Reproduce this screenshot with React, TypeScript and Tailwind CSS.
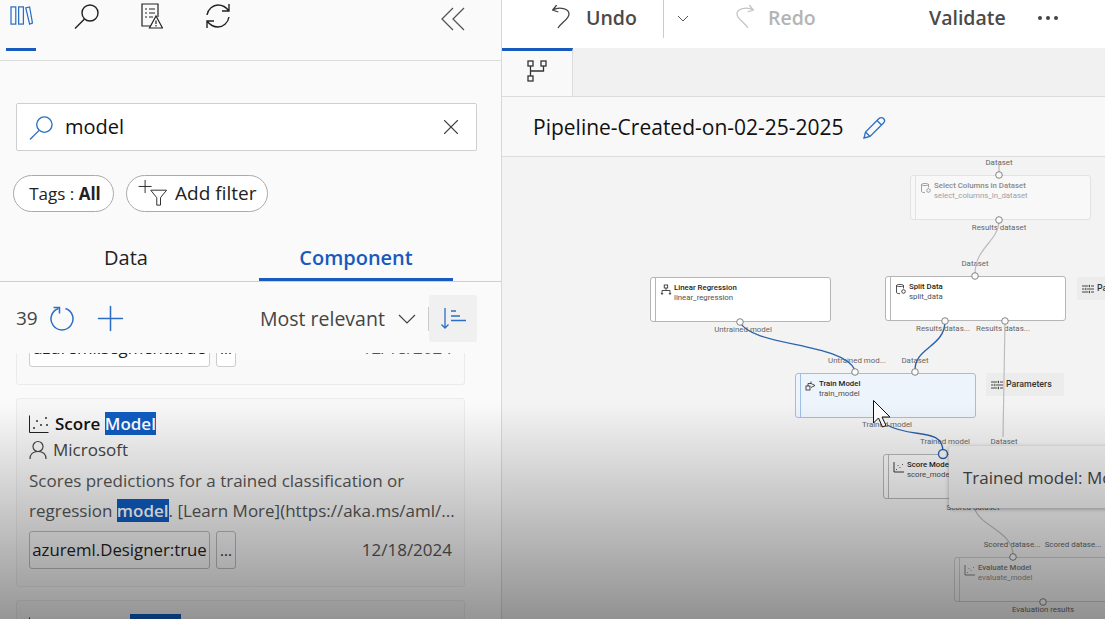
import { Plus, X } from 'lucide-react';

const portLabels = [
  { text: 'Dataset', className: 'left-[497px] top-[6px]' },
  { text: 'Results dataset', className: 'left-[497px] top-[71px]' },
  { text: 'Dataset', className: 'left-[473px] top-[107px]' },
  { text: 'Untrained model', className: 'left-[241px] top-[173px]' },
  { text: 'Results datas...', className: 'left-[441px] top-[172px]' },
  { text: 'Results datas...', className: 'left-[501px] top-[172px]' },
  { text: 'Untrained mod...', className: 'left-[355px] top-[204px]' },
  { text: 'Dataset', className: 'left-[413px] top-[204px]' },
  { text: 'Trained model', className: 'left-[385px] top-[268px]' },
  { text: 'Trained model', className: 'left-[443px] top-[285px]' },
  { text: 'Dataset', className: 'left-[502px] top-[285px]' },
  { text: 'Scored dataset', className: 'left-[471px] top-[351px]' },
  { text: 'Scored datase...', className: 'left-[510px] top-[388px]' },
  { text: 'Scored datase...', className: 'left-[571px] top-[388px]' },
  { text: 'Evaluation results', className: 'left-[541px] top-[453px]' },
];

const ports = [
  [497, 18],
  [497, 63],
  [473, 119],
  [238, 165],
  [443, 164],
  [503, 164],
  [353, 215],
  [413, 215],
  [511, 400],
  [541, 445],
];

const NodeIcon = ({ kind }: { kind: string }) => {
  if (kind === 'data') {
    return (
      <svg viewBox="0 0 12 12" className="h-3 w-3 shrink-0" fill="none" stroke="currentColor" strokeWidth="0.8">
        <path d="M1.5 2.5c0-1.4 7-1.4 7 0v3M1.5 2.5v7c0 .8 2 1.100 3.500 1.100M1.500 2.500c0 1.400 7 1.400 7 0" />
        <circle cx="8.500" cy="8.500" r="1.800" />
      </svg>
    );
  }
  if (kind === 'tree') {
    return (
      <svg viewBox="0 0 12 12" className="h-3 w-3 shrink-0" fill="none" stroke="currentColor" strokeWidth="0.8">
        <rect x="4.200" y="1" width="3.500" height="3" />
        <path d="M6 4v2.500M2 10V6.500h8V10" />
        <path d="M1 9l1 1.500L3 9M9 9l1 1.500L11 9" />
      </svg>
    );
  }
  if (kind === 'train') {
    return (
      <svg viewBox="0 0 12 12" className="h-3 w-3 shrink-0" fill="none" stroke="currentColor" strokeWidth="0.8">
        <rect x="1" y="6" width="4" height="4" />
        <path d="M3 6V3.500h3V1.500M6 3.500l4 2-4 2" />
      </svg>
    );
  }
  return (
    <svg viewBox="0 0 12 12" className="h-3 w-3 shrink-0" fill="none" stroke="currentColor" strokeWidth="0.9">
      <path d="M1 1v10h10" />
      <path d="M3.500 8v.8M5 4v.8M7 6v.8M9.500 3v.8" />
    </svg>
  );
};

const PipelineNode = ({
  title,
  name,
  icon,
  className,
}: {
  title: string;
  name: string;
  icon: string;
  className: string;
}) => (
  <div className={`absolute flex h-[45px] w-[181px] rounded-[3px] border ${className}`}>
    <div className="w-[5px] shrink-0 border-r border-inherit" />
    <div className="flex gap-[2px] pl-[4px] pt-[5px] font-['Roboto',sans-serif]">
      <div className="pt-[1px]">
        <NodeIcon kind={icon} />
      </div>
      <div className="text-[7.800px] leading-[10px]">
        <div className="font-medium">{title}</div>
        <div className="font-normal opacity-80">{name}</div>
      </div>
    </div>
  </div>
);

const ParamsIcon = () => (
  <svg viewBox="0 0 12 10" className="h-[10px] w-3 shrink-0" fill="none" stroke="currentColor" strokeWidth="0.9">
    <path d="M0 2h6.500M9 2h3M0 5h2.500M5 5h7M0 8h6.500M9 8h3" />
    <path d="M7.500 .8v2.400M3.800 3.800v2.400M7.500 6.800v2.400" />
  </svg>
);

const ScatterIcon = () => (
  <svg viewBox="0 0 20 18" className="h-[18px] w-5 shrink-0" fill="none" stroke="#222" strokeWidth="1">
    <path d="M.5 .5v17h19" />
    <path d="M5 12v2M8 5v2M12 9v2M17 2v2M18 9v2" strokeWidth="1.400" />
  </svg>
);

const ComponentCard = () => (
  <div className="mt-[13px] h-[189px] rounded-[3px] border border-[#ebebeb] bg-[#f7f7f7] px-3 pt-[13px]">
    <div className="flex h-[24px] items-center gap-[6px]">
      <ScatterIcon />
      <span className="text-[17px] font-semibold text-[#111]">
        Score <mark className="bg-[#0f5cc0] text-white">Model</mark>
      </span>
    </div>
    <div className="mt-[2px] flex h-[24px] items-center gap-[6px] text-[17px] text-[#444]">
      <svg viewBox="0 0 18 20" className="h-5 w-[18px]" fill="none" stroke="#444" strokeWidth="1.200">
        <circle cx="9" cy="6.500" r="5" />
        <path d="M1 19c0-5 3-7.500 8-7.500s8 2.500 8 7.500" />
      </svg>
      Microsoft
    </div>
    <p className="mt-[4px] text-[17px] leading-[30px] whitespace-nowrap text-[#555]">
      Scores predictions for a trained classification or
      <br />
      regression <mark className="bg-[#0f5cc0] font-semibold text-white">model</mark>. [Learn More](https://aka.ms/aml/...
    </p>
    <div className="mt-[5px] flex items-center">
      <span className="flex h-[38px] w-[181px] items-center justify-center rounded-[3px] border border-[#bbb] text-[16.800px] text-[#222]">
        azureml.Designer:true
      </span>
      <span className="ml-[6px] flex h-[38px] w-[20px] items-center justify-center rounded-[3px] border border-[#bbb] text-[15px] text-[#222]">
        ...
      </span>
      <span className="ml-auto text-[17px] text-[#555]">12/18/2024</span>
    </div>
  </div>
);

const LeftPanel = () => (
  <aside className="flex h-full w-[502px] shrink-0 flex-col border-r border-[#d8d8d8] bg-[#fafafa]">
    {/* Icon tabs */}
    <div className="flex h-[61px] shrink-0 items-start border-b border-[#dcdcdc] pr-[36px]">
      <div className="ml-[6px] flex h-[51px] w-[30px] justify-center border-b-[3px] border-[#185abd] pt-[5px]">
        <svg viewBox="0 0 24 22" className="h-[21px] w-[23px]" fill="none" stroke="#2a6fc4" strokeWidth="1.300">
          <rect x="1" y="2" width="5" height="18" />
          <rect x="9" y="2" width="5" height="18" />
          <path d="M16.500 3l4-1 3 17-3 1z" />
        </svg>
      </div>
      <svg viewBox="0 0 26 26" className="ml-[38px] mt-[3px] h-[26px] w-[26px]" fill="none" stroke="#222" strokeWidth="1.400">
        <circle cx="16" cy="10" r="8" />
        <path d="M10.500 16L1 25.500" />
      </svg>
      <svg viewBox="0 0 22 26" className="ml-[41px] mt-[3px] h-[26px] w-[22px]" fill="none" stroke="#222" strokeWidth="1.200">
        <path d="M9 23H1V1h16v13" />
        <path d="M4 6h2M8 6h6M4 10h2M8 10h6M4 14h2M8 14h4" />
        <path d="M15 13l6.500 12h-13z" fill="#fafafa" />
        <path d="M15 17.500v3.500M15 22v1.500" />
      </svg>
      <svg viewBox="0 0 26 26" className="ml-[42px] mt-[3px] h-[26px] w-[26px]" fill="none" stroke="#222" strokeWidth="1.400">
        <path d="M2 12C3 6 8 2 13 2c4 0 8 2 11 6M24 1v7h-7" />
        <path d="M24 14c-1 6-6 10-11 10-4 0-8-2-11-6M2 25v-7h7" />
      </svg>
      <svg viewBox="0 0 24 24" className="ml-auto mt-[7px] h-[24px] w-[24px]" fill="none" stroke="#555" strokeWidth="1.300">
        <path d="M12 1L1 12l11 11M23 1L12 12l11 11" />
      </svg>
    </div>

    {/* Search */}
    <div className="mx-4 mt-[42px] flex h-12 w-[461px] shrink-0 items-center rounded-[2px] border border-[#cfcfcf] bg-white pl-[12px] pr-[12px]">
      <svg viewBox="0 0 26 26" className="h-[25px] w-[25px]" fill="none" stroke="#2a6fc4" strokeWidth="1.400">
        <circle cx="16" cy="10" r="8" />
        <path d="M10.500 16L1 25.500" />
      </svg>
      <span className="ml-[11px] text-[20px] text-[#111]">model</span>
      <X className="ml-auto h-[26px] w-[26px] text-[#444]" strokeWidth={1} />
    </div>

    {/* Filters */}
    <div className="ml-[13px] mt-6 flex shrink-0 gap-3">
      <div className="flex h-[37px] w-[101px] items-center justify-center rounded-full border border-[#aaa] bg-white pl-[3px] text-[17px] text-[#222]">
        Tags :&nbsp;<b className="font-bold">All</b>
      </div>
      <div className="flex h-[37px] w-[142px] items-center rounded-full border border-[#aaa] bg-white pl-[11px] text-[19px] text-[#222]">
        <svg viewBox="0 0 32 30" className="mb-[2px] h-[28px] w-[31px]" fill="none" stroke="#222" strokeWidth="1">
          <path d="M7 1v14M0 8h14" />
          <path d="M13 12h17l-6.500 8v8h-4v-8z" />
        </svg>
        <span className="ml-[6px]">Add filter</span>
      </div>
    </div>

    {/* Data / Component tabs */}
    <div className="mt-[25px] flex h-[45px] shrink-0 items-stretch border-b border-[#cfcfcf] pl-[7px]">
      <div className="flex w-[238px] items-center justify-center pb-[2px] text-[20px] text-[#222]">Data</div>
      <div className="ml-[14px] flex w-[194px] items-center justify-center border-b-[3px] border-[#185abd] pt-[1px] text-[20px] font-semibold text-[#185abd]">
        Component
      </div>
    </div>

    {/* Sort row */}
    <div className="flex h-[71px] shrink-0 items-center pl-4 pr-6 pt-[2px]">
      <span className="w-[22px] text-[19px] text-[#444]">39</span>
      <svg viewBox="0 0 26 26" className="ml-[11px] h-[26px] w-[26px]" fill="none" stroke="#2a6fc4" strokeWidth="1.500">
        <path d="M16.500 2.500a11 11 0 1 1-7 0" />
        <path d="M4.500 1.500h6v6" />
      </svg>
      <Plus className="ml-[15px] h-[41px] w-[41px] text-[#2a6fc4]" strokeWidth={0.9} />
      <span className="ml-[129px] w-[127px] whitespace-nowrap text-[19.500px] text-[#444]">Most relevant</span>
      <svg viewBox="0 0 18 10" className="ml-[11px] h-[10px] w-[18px]" fill="none" stroke="#444" strokeWidth="1.200">
        <path d="M1 1l8 8 8-8" />
      </svg>
      <div className="ml-[12px] h-[24px] w-px bg-[#ccc]" />
      <div className="flex h-[47px] w-[48px] items-center justify-center rounded-[3px] bg-[#f0f0f0]">
        <svg viewBox="0 0 25 21" className="h-[21px] w-[25px]" fill="none" stroke="#2a6fc4" strokeWidth="1.300">
          <path d="M4 0v20M.5 16.500L4 20l3.500-3.500" />
          <path d="M10 3h5M10 8h9M10 12.500h15" />
        </svg>
      </div>
    </div>

    {/* Results list */}
    <div className="min-h-0 flex-1 overflow-hidden pl-4 pr-9">
      <div className="-mt-[8px] h-[40px] rounded-[3px] border border-[#ebebeb] bg-[#f9f9f9] px-3">
        <div className="-mt-[17px] flex items-center">
          <span className="flex h-[38px] w-[181px] items-center justify-center rounded-[3px] border border-[#ccc] bg-white text-[16.800px] text-[#222]">
            azureml.segment:true
          </span>
          <span className="ml-[6px] flex h-[38px] w-[20px] items-center justify-center rounded-[3px] border border-[#ccc] bg-white text-[15px] text-[#222]">
            ...
          </span>
          <span className="ml-auto text-[17px] text-[#555]">12/18/2024</span>
        </div>
      </div>
      <ComponentCard />
      <div className="mt-[13px] rounded-[3px] border border-[#ebebeb] bg-[#f7f7f7] px-3 pt-[13px]">
        <div className="flex h-[24px] items-center gap-[6px]">
          <ScatterIcon />
          <span className="text-[17px] font-semibold text-[#111]">
            Evaluate <mark className="bg-[#0f5cc0] text-white">Model</mark>
          </span>
        </div>
      </div>
    </div>
  </aside>
);

const Canvas = () => (
  <div className="relative min-h-0 flex-1 overflow-hidden bg-[#f3f3f3]">
    <PipelineNode
      title="Select Columns in Dataset"
      name="select_columns_in_dataset"
      icon="data"
      className="left-[408px] top-[18px] border-[#e2e2e2] bg-[#f8f8f8] text-[#8a8a8a]"
    />
    <PipelineNode
      title="Linear Regression"
      name="linear_regression"
      icon="tree"
      className="left-[148px] top-[120px] border-[#b5b5b5] bg-white text-[#222]"
    />
    <PipelineNode
      title="Split Data"
      name="split_data"
      icon="data"
      className="left-[383px] top-[119px] border-[#b5b5b5] bg-white text-[#222]"
    />
    <PipelineNode
      title="Train Model"
      name="train_model"
      icon="train"
      className="left-[293px] top-[216px] border-[#9dbfe6] bg-[#eef4fb] text-[#222]"
    />
    <PipelineNode
      title="Score Model"
      name="score_model"
      icon="scatter"
      className="left-[381px] top-[297px] border-[#b5b5b5] bg-[#f7f7f7] text-[#222]"
    />
    <PipelineNode
      title="Evaluate Model"
      name="evaluate_model"
      icon="scatter"
      className="left-[452px] top-[400px] border-[#cfcfcf] bg-[#f5f5f5] text-[#777]"
    />

    <div className="absolute left-[575px] top-[120px] flex h-[23px] w-[90px] items-center gap-[3px] bg-[#ececec] pl-[5px] font-['Roboto',sans-serif] text-[8.800px] font-medium text-[#333]">
      <ParamsIcon />
      Parameters
    </div>
    <div className="absolute left-[484px] top-[216px] flex h-[23px] w-[78px] items-center gap-[3px] bg-[#ececec] pl-[5px] font-['Roboto',sans-serif] text-[8.800px] font-medium text-[#333]">
      <ParamsIcon />
      Parameters
    </div>

    {portLabels.map((label, i) => (
      <span
        key={i}
        className={`absolute -translate-x-1/2 -translate-y-1/2 whitespace-nowrap font-['Roboto',sans-serif] text-[7.900px] text-[#666] ${label.className}`}
      >
        {label.text}
      </span>
    ))}

    {/* Connectors and ports */}
    <svg viewBox="0 0 603 462" className="absolute inset-0 h-[462px] w-[603px]" fill="none">
      <path d="M497 8V16M497 63C497 85 473 90 473 117M503 164L501 280M473 353C480 370 511 375 511 398" stroke="#bdbdbd" strokeWidth="1.200" />
      <path d="M238 165C250 190 340 185 353 213M443 164C443 190 413 190 413 213M385 268C410 282 441 270 441 295" stroke="#2a63ad" strokeWidth="1.400" />
      {ports.map(([cx, cy]) => (
        <circle key={`${cx}-${cy}`} cx={cx} cy={cy} r="3.300" fill="#fafafa" stroke="#777" strokeWidth="0.900" />
      ))}
      <circle cx="441" cy="297" r="4.500" fill="#f5f5f5" stroke="#2a63ad" strokeWidth="1.400" />
    </svg>

    {/* Tooltip */}
    <div className="absolute left-[447px] top-[289px] flex h-[62px] w-[170px] items-center overflow-hidden whitespace-nowrap rounded-l-[3px] bg-[#f1f1f1] pl-[14px] pt-[2px] text-[17px] text-[#444] shadow-[0_1px_4px_rgba(0,0,0,0.3)]">
      Trained model: Model
    </div>

    {/* Mouse cursor */}
    <svg viewBox="0 0 19 28" className="absolute left-[371px] top-[243px] h-7 w-[19px]" fill="#fff" stroke="#111" strokeWidth="1">
      <path d="M.5 .5V23l5-5 4 9 3.500-1.500-4-8.500h8z" />
    </svg>
  </div>
);

const RightPanel = () => (
  <main className="flex h-full min-w-0 flex-1 flex-col">
    {/* Command bar */}
    <div className="flex h-12 shrink-0 items-center bg-white pb-[12px] text-[19.500px] font-semibold">
      <svg viewBox="0 0 20 26" className="ml-[50px] h-[26px] w-5" fill="none" stroke="#444" strokeWidth="1.300">
        <path d="M4.700 0L.7 5l5.600 2M.7 5C8 1 17 4 17 9c0 5-7 8-11 14" />
      </svg>
      <span className="ml-[14px] w-[51px] text-[#4a4a4a]">Undo</span>
      <div className="ml-[26px] h-[38px] w-px self-start bg-[#ccc]" />
      <svg viewBox="0 0 12 7" className="ml-[13px] h-[7px] w-3" fill="none" stroke="#555" strokeWidth="1">
        <path d="M1 1l5 5 5-5" />
      </svg>
      <svg viewBox="0 0 20 26" className="ml-[45px] h-[26px] w-5" fill="none" stroke="#c4c4c4" strokeWidth="1.300">
        <path d="M15.300 0l4 5-5.600 2M19.300 5C12 1 3 4 3 9c0 5 7 8 11 14" />
      </svg>
      <span className="ml-[14px] w-[49px] text-[#b4b4b4]">Redo</span>
      <span className="ml-[112px] w-[77px] text-[#4a4a4a]">Validate</span>
      <span className="ml-[32px] flex gap-[4px]">
        <i className="h-1 w-1 rounded-full bg-[#444]" />
        <i className="h-1 w-1 rounded-full bg-[#444]" />
        <i className="h-1 w-1 rounded-full bg-[#444]" />
      </span>
    </div>

    {/* Tab strip */}
    <div className="flex h-12 shrink-0 bg-[#f1f1f1]">
      <div className="flex w-[71px] justify-center border-r border-[#dcdcdc] border-t-[3px] border-t-[#185abd] bg-[#f9f9f9] pt-[9px]">
        <svg viewBox="0 0 20 22" className="h-[22px] w-5" fill="none" stroke="#333" strokeWidth="1.300">
          <rect x="1" y="1" width="5" height="5" />
          <rect x="14" y="1" width="5" height="5" />
          <rect x="1" y="16" width="5" height="5" />
          <path d="M3.500 6v10M3.500 11h13V6" />
        </svg>
      </div>
    </div>

    {/* Pipeline title */}
    <div className="flex h-[61px] shrink-0 items-center border-y border-[#dcdcdc] bg-[#f8f8f8] pl-[31px] pt-[2px] text-[21px] font-medium text-[#111]">
      Pipeline-Created-on-02-25-2025
      <svg viewBox="0 0 24 24" className="ml-[18px] h-6 w-6" fill="none" stroke="#2a6fc4" strokeWidth="1.300">
        <path d="M2 22l1.500-6L17 2.500a2.500 2.500 0 0 1 4.500 4.500L8 20.500zM3.500 16L8 20.500M15 4.500l4.500 4.500" />
      </svg>
    </div>

    <Canvas />
  </main>
);

export default function App() {
  return (
    <div className="relative flex h-[619px] w-[1105px] overflow-hidden bg-white font-['Open_Sans',sans-serif]">
      <LeftPanel />
      <RightPanel />
      {/* Darkening towards the bottom of the frame */}
      <div className="pointer-events-none absolute inset-x-0 bottom-0 h-[215px] bg-gradient-to-b from-transparent to-black/40" />
    </div>
  );
}
